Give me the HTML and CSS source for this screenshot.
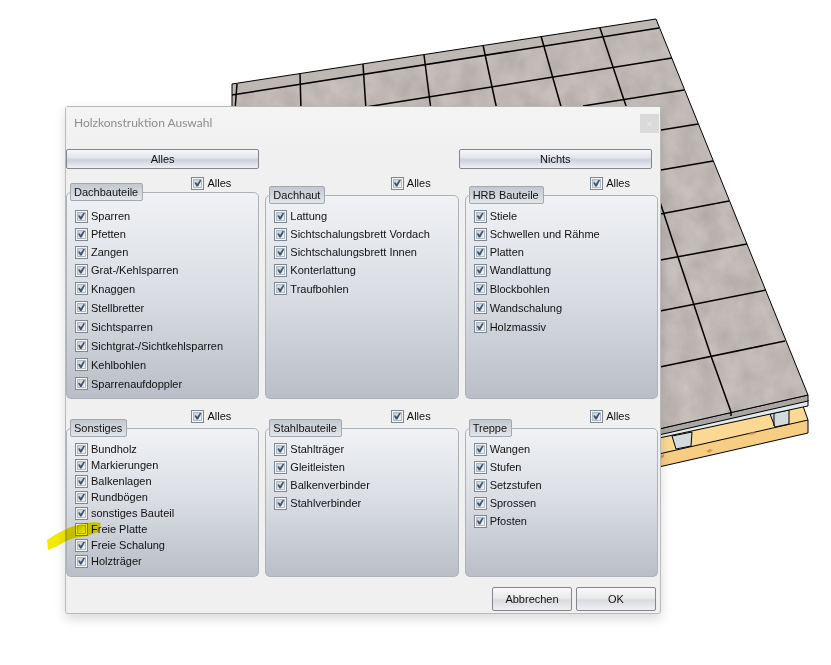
FILE: index.html
```html
<!doctype html>
<html lang="de">
  <head>
    <meta charset="utf-8">
    <meta name="viewport" content="width=device-width, initial-scale=1">
    <title>Holzkonstruktion Auswahl</title>
    <link rel="stylesheet" href="styles.css">
  </head>
  <body>
    <svg class="scene" viewBox="0 0 831 665" aria-hidden="true">
      <defs>
        <filter id="stone" x="0" y="0" width="100%" height="100%" color-interpolation-filters="sRGB">
          <feTurbulence type="fractalNoise" baseFrequency="0.05 0.04" numOctaves="4" seed="7" result="noise"/>
          <feColorMatrix in="noise" type="matrix" values="0.12 0 0 0 0.69  0.12 0 0 0 0.66  0.12 0 0 0 0.65  0 0 0 0 1" result="tint"/>
          <feComposite in="tint" in2="SourceGraphic" operator="in"/>
        </filter>
      </defs>
      <!-- beams -->
      <path fill="#f6cd83" d="M650 436L803 406L808 420V433L650 469z"/>
      <path fill="#fbd992" d="M650 440L803 407L808 420L650 456z"/>
      <path fill="none" stroke="#000" d="M803 406L808 420V433L650 469M650 456L808 420"/>
      <path fill="#d09a4e" d="M706 451l4-2 3 1-4 3zM660 456l4-2v3l-4 2zM748 434l6-2 1 2-5 1z"/>
      <path fill="#d3dadd" stroke="#000" d="M672 436L692 432L691 446L676 449zM770 414L774 413V408L789 405V424L775 427z"/>
      <path fill="none" stroke="#000" d="M774 409V426M774 413L789 410"/>
      <!-- slab -->
      <path fill="#dfe8ea" stroke="#000" d="M650 436L808 400V406L803 407L650 440z"/>
      <path fill="#aaa6a4" stroke="#000" d="M650 431L808 395V401L650 437z"/>
      <path filter="url(#stone)" d="M232 84L656 19L808 395L650 431L232 200z"/>
      <path fill="#bcb8b4" d="M232 84L656 19L659 28L236 94L235 110H232z" opacity=".7"/>
      <path fill="none" stroke="#000" d="M232 110V84L656 19L808 395L650 431"/>
      <g fill="none" stroke="#000" stroke-width="1.5">
        <path d="M237 84L235 110M300 74L301 110M363 64L366 110M424 55L431 110M483 45L497 110M541 36L562 110M600 28L626 106L661 205L678 257L711 356L731 412V416"/>
        <path d="M232 95L659 28M366 107L672 58M583 106L684 90M655 131L698 124M655 171L713 161M655 215L729 201M655 261L747 244M655 312L766 290M655 368L785 341"/>
      </g>
    </svg>

    <form class="dialog">
      <header>
        <h1>Holzkonstruktion Auswahl</h1>
        <button type="button" class="close" aria-label="Schließen">×</button>
      </header>

      <div class="presets">
        <button type="button">Alles</button>
        <button type="button">Nichts</button>
      </div>

      <div class="groups">
        <div class="group high">
          <label class="all"><input type="checkbox" checked>Alles</label>
          <fieldset>
            <legend>Dachbauteile</legend>
            <label><input type="checkbox" checked>Sparren</label>
            <label><input type="checkbox" checked>Pfetten</label>
            <label><input type="checkbox" checked>Zangen</label>
            <label><input type="checkbox" checked>Grat-/Kehlsparren</label>
            <label><input type="checkbox" checked>Knaggen</label>
            <label><input type="checkbox" checked>Stellbretter</label>
            <label><input type="checkbox" checked>Sichtsparren</label>
            <label><input type="checkbox" checked>Sichtgrat-/Sichtkehlsparren</label>
            <label><input type="checkbox" checked>Kehlbohlen</label>
            <label><input type="checkbox" checked>Sparrenaufdoppler</label>
          </fieldset>
        </div>
        <div class="group">
          <label class="all"><input type="checkbox" checked>Alles</label>
          <fieldset>
            <legend>Dachhaut</legend>
            <label><input type="checkbox" checked>Lattung</label>
            <label><input type="checkbox" checked>Sichtschalungsbrett Vordach</label>
            <label><input type="checkbox" checked>Sichtschalungsbrett Innen</label>
            <label><input type="checkbox" checked>Konterlattung</label>
            <label><input type="checkbox" checked>Traufbohlen</label>
          </fieldset>
        </div>
        <div class="group">
          <label class="all"><input type="checkbox" checked>Alles</label>
          <fieldset>
            <legend>HRB Bauteile</legend>
            <label><input type="checkbox" checked>Stiele</label>
            <label><input type="checkbox" checked>Schwellen und Rähme</label>
            <label><input type="checkbox" checked>Platten</label>
            <label><input type="checkbox" checked>Wandlattung</label>
            <label><input type="checkbox" checked>Blockbohlen</label>
            <label><input type="checkbox" checked>Wandschalung</label>
            <label><input type="checkbox" checked>Holzmassiv</label>
          </fieldset>
        </div>
        <div class="group compact">
          <label class="all"><input type="checkbox" checked>Alles</label>
          <fieldset>
            <legend>Sonstiges</legend>
            <label><input type="checkbox" checked>Bundholz</label>
            <label><input type="checkbox" checked>Markierungen</label>
            <label><input type="checkbox" checked>Balkenlagen</label>
            <label><input type="checkbox" checked>Rundbögen</label>
            <label><input type="checkbox" checked>sonstiges Bauteil</label>
            <label class="marked"><input type="checkbox">Freie Platte
              <svg class="marker" viewBox="0 0 56 32" aria-hidden="true"><path fill="#f4ea00" d="M0 20Q14 10 30 5Q44 1 54 3L52 12L40 16Q24 17 14 24Q6 28 1 30z"/></svg>
            </label>
            <label><input type="checkbox" checked>Freie Schalung</label>
            <label><input type="checkbox" checked>Holzträger</label>
          </fieldset>
        </div>
        <div class="group">
          <label class="all"><input type="checkbox" checked>Alles</label>
          <fieldset>
            <legend>Stahlbauteile</legend>
            <label><input type="checkbox" checked>Stahlträger</label>
            <label><input type="checkbox" checked>Gleitleisten</label>
            <label><input type="checkbox" checked>Balkenverbinder</label>
            <label><input type="checkbox" checked>Stahlverbinder</label>
          </fieldset>
        </div>
        <div class="group">
          <label class="all"><input type="checkbox" checked>Alles</label>
          <fieldset>
            <legend>Treppe</legend>
            <label><input type="checkbox" checked>Wangen</label>
            <label><input type="checkbox" checked>Stufen</label>
            <label><input type="checkbox" checked>Setzstufen</label>
            <label><input type="checkbox" checked>Sprossen</label>
            <label><input type="checkbox" checked>Pfosten</label>
          </fieldset>
        </div>
      </div>

      <footer>
        <button type="button">Abbrechen</button>
        <button type="submit">OK</button>
      </footer>
    </form>
  </body>
</html>
```
FILE: styles.css
```css
* {
  box-sizing: border-box;
}
body {
  margin: 0;
  padding: 106px 170px 50px 65px;
  background: white;
  color: #111;
  font: 11px/14px "Liberation Sans", Arial, sans-serif;
}
.scene {
  position: absolute;
  top: 0;
  left: 0;
  width: 100%;
}
.dialog {
  position: relative;
  min-width: 520px;
  background: #f0f0f0;
  border: 1px solid #b9b9b9;
  border-radius: 3px;
  box-shadow: 0 5px 12px rgba(0, 0, 0, 0.15);
}
.dialog header {
  display: flex;
  justify-content: space-between;
  height: 42px;
  padding: 7px 1px 0 8px;
  background: linear-gradient(#f4f4f4, #f0f0f0);
}
h1 {
  margin: 0;
  color: #8d8d8d;
  font: 12px/17px Lato, "Segoe UI", sans-serif;
}
button {
  padding: 0;
  border: 1px solid #85858c;
  border-radius: 2px;
  background: linear-gradient(#f6f7fa, #e4e6ec 40%, #cdd0da 55%, #f0f1f5);
  color: #111;
  font: inherit;
}
.close {
  width: 19px;
  height: 19px;
  border: none;
  border-radius: 0;
  background: #dadada;
  color: #ececec;
}
.presets {
  display: flex;
  justify-content: space-between;
  padding-right: 8px;
}
.presets button {
  width: 33%;
  height: 20px;
}
.groups {
  display: grid;
  grid-template-columns: repeat(3, 1fr);
  gap: 10px 6px;
  padding: 7px 2px 0 0;
}
.group {
  display: grid;
}
/* the "Alles" box shares its line with the legend */
.all, fieldset {
  grid-area: 1 / 1;
}
.all {
  align-self: start;
  justify-self: end;
  margin-right: 28px;
}
label {
  display: flex;
  align-items: center;
  gap: 3px;
}
fieldset {
  min-width: 0;
  margin: 10px 0 0;
  padding: 3px 8px 4px;
  border: 1px solid #adb2b8;
  border-radius: 5px;
  background: linear-gradient(#f0f2f5, #d9dce2 50%, #b9bec8);
}
fieldset label {
  height: 18px;
}
.group:nth-child(-n+3) fieldset label:nth-of-type(n+5) {
  height: 19px;
}
.high fieldset {
  margin-top: 7px;
  padding: 6px 8px 5px;
}
.compact fieldset {
  padding: 4px 8px 7px;
}
.compact fieldset label {
  height: 16px;
}
legend {
  height: 18px;
  margin-left: -5px;
  padding: 0 4px 0 3px;
  border: 1px solid #a4a9b0;
  border-radius: 2px;
  background: linear-gradient(#c3c8d0, #e2e6ea);
  line-height: 16px;
}
input[type="checkbox"] {
  appearance: none;
  display: grid;
  flex: none;
  width: 13px;
  height: 13px;
  margin: 0;
  padding: 1px;
  border: 1px solid #7d8793;
  background: #f6f7f8;
}
input[type="checkbox"]::before {
  content: "";
  border: 1px solid #b0b8c2;
  background: linear-gradient(135deg, #c6cdd4, #f4f6f7);
  grid-area: 1 / 1;
}
input[type="checkbox"]:checked::after {
  content: "";
  grid-area: 1 / 1;
  margin: 1px;
  background: #40566f;
  clip-path: polygon(0 45%, 22% 38%, 40% 62%, 80% 0, 100% 8%, 52% 100%, 30% 100%);
}
.marked {
  position: relative;
}
.marker {
  position: absolute;
  top: -1px;
  left: -28px;
  width: 56px;
  mix-blend-mode: multiply;
}
footer {
  display: flex;
  justify-content: flex-end;
  gap: 4px;
  padding: 10px 4px 2px;
}
footer button {
  width: 80px;
  height: 24px;
  background: linear-gradient(#f8f8f9, #ebebed 45%, #d9dbdf 55%, #f0f0f2);
}
```
